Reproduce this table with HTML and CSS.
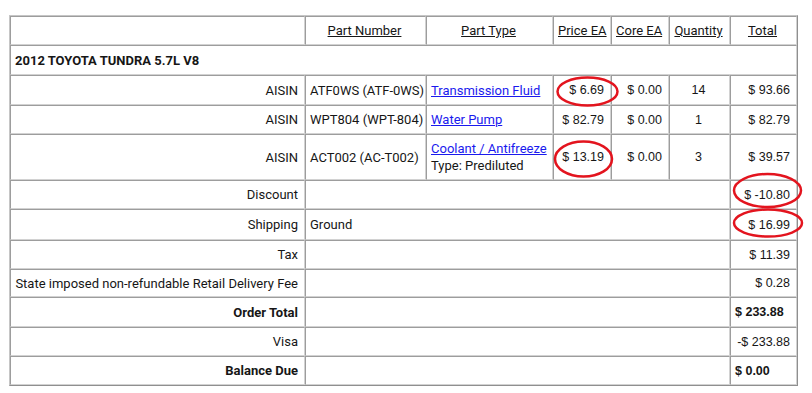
FILE: index.html
```html
<!DOCTYPE html>
<html>
<head>
<meta charset="utf-8">
<link rel="stylesheet" href="styles.css">
</head>
<body>
<div class="page">
  <table class="order">
    <colgroup>
      <col class="c1"><col class="c2"><col class="c3"><col class="c4"><col class="c5"><col class="c6"><col class="c7">
    </colgroup>
    <tr class="h29">
      <td></td>
      <th><u>Part Number</u></th>
      <th><u>Part Type</u></th>
      <th><u>Price EA</u></th>
      <th><u>Core EA</u></th>
      <th><u>Quantity</u></th>
      <th><u>Total</u></th>
    </tr>
    <tr class="h30">
      <td colspan="7" class="vehicle">2012 TOYOTA TUNDRA 5.7L V8</td>
    </tr>
    <tr class="h30">
      <td class="r">AISIN</td>
      <td>ATF0WS (ATF-0WS)</td>
      <td><a href="#">Transmission Fluid</a></td>
      <td class="r money">$ 6.69</td>
      <td class="r money">$ 0.00</td>
      <td class="c money">14</td>
      <td class="r money">$ 93.66</td>
    </tr>
    <tr class="h29">
      <td class="r">AISIN</td>
      <td>WPT804 (WPT-804)</td>
      <td><a href="#">Water Pump</a></td>
      <td class="r money">$ 82.79</td>
      <td class="r money">$ 0.00</td>
      <td class="c money">1</td>
      <td class="r money">$ 82.79</td>
    </tr>
    <tr class="h46">
      <td class="r">AISIN</td>
      <td>ACT002 (AC-T002)</td>
      <td class="two"><a href="#">Coolant / Antifreeze</a><br>Type: Prediluted</td>
      <td class="r money">$ 13.19</td>
      <td class="r money">$ 0.00</td>
      <td class="c money">3</td>
      <td class="r money">$ 39.57</td>
    </tr>
    <tr class="h29">
      <td class="r">Discount</td>
      <td colspan="5"></td>
      <td class="r money">$ -10.80</td>
    </tr>
    <tr class="h31">
      <td class="r">Shipping</td>
      <td colspan="5">Ground</td>
      <td class="r money">$ 16.99</td>
    </tr>
    <tr class="h29">
      <td class="r">Tax</td>
      <td colspan="5"></td>
      <td class="r money">$ 11.39</td>
    </tr>
    <tr class="h28">
      <td class="r">State imposed non-refundable Retail Delivery Fee</td>
      <td colspan="5"></td>
      <td class="r money">$ 0.28</td>
    </tr>
    <tr class="h30">
      <td class="r b">Order Total</td>
      <td colspan="5"></td>
      <td class="money b">$ 233.88</td>
    </tr>
    <tr class="h29">
      <td class="r">Visa</td>
      <td colspan="5"></td>
      <td class="r money">-$ 233.88</td>
    </tr>
    <tr class="h29">
      <td class="r b">Balance Due</td>
      <td colspan="5"></td>
      <td class="money b">$ 0.00</td>
    </tr>
  </table>
  <svg class="marks" width="812" height="393" viewBox="0 0 812 393">
    <ellipse cx="587.5" cy="91.5" rx="30" ry="14" />
    <ellipse cx="583.5" cy="159" rx="28.5" ry="17.5" />
    <ellipse cx="767.5" cy="190.5" rx="33.5" ry="16.5" />
    <ellipse cx="768" cy="223" rx="34" ry="13.5" />
  </svg>
</div>
</body>
</html>
```
FILE: styles.css
```css
html, body {
  margin: 0;
  padding: 0;
  background: #ffffff;
}
.page {
  position: relative;
  width: 812px;
  height: 393px;
  padding: 15px 0 0 9px;
  box-sizing: border-box;
  font-family: Roboto, "Liberation Sans", sans-serif;
  font-size: 13px;
  color: #161616;
}
.order {
  table-layout: fixed;
  width: 787px;
  border-collapse: separate;
  border-spacing: 0;
  border: 1px solid;
  border-color: #c6c6c6 #8f8f8f #8f8f8f #c6c6c6;
}
.c1 { width: 295px; }
.c2 { width: 121px; }
.c3 { width: 127px; }
.c4 { width: 58px; }
.c5 { width: 58px; }
.c6 { width: 61px; }
.c7 { width: 67px; }
.order td, .order th {
  border: 1px solid;
  border-color: #9d9d9d #d2d2d2 #d2d2d2 #9d9d9d;
  padding: 0 6px 0 4px;
  text-align: left;
  vertical-align: middle;
  white-space: nowrap;
  font-weight: normal;
}
.order th {
  text-align: center;
}
.order .r { text-align: right; }
.order .c { text-align: center; }
.order .b { font-weight: bold; }
.order .vehicle { font-weight: bold; }
.money {
  font-family: "Liberation Sans", Arial, sans-serif;
  font-size: 12.5px;
}
.h28 td { height: 26px; }
.h29 td, .h29 th { height: 27px; }
.h30 td { height: 28px; }
.h31 td { height: 29px; }
.h46 td { height: 44px; }
.two {
  line-height: 17px;
}
a {
  color: #1a1aee;
  text-decoration: underline;
}
.marks {
  position: absolute;
  left: 0;
  top: 0;
  pointer-events: none;
}
.marks ellipse {
  fill: none;
  stroke: #e3141e;
  stroke-width: 2.5;
}
```
